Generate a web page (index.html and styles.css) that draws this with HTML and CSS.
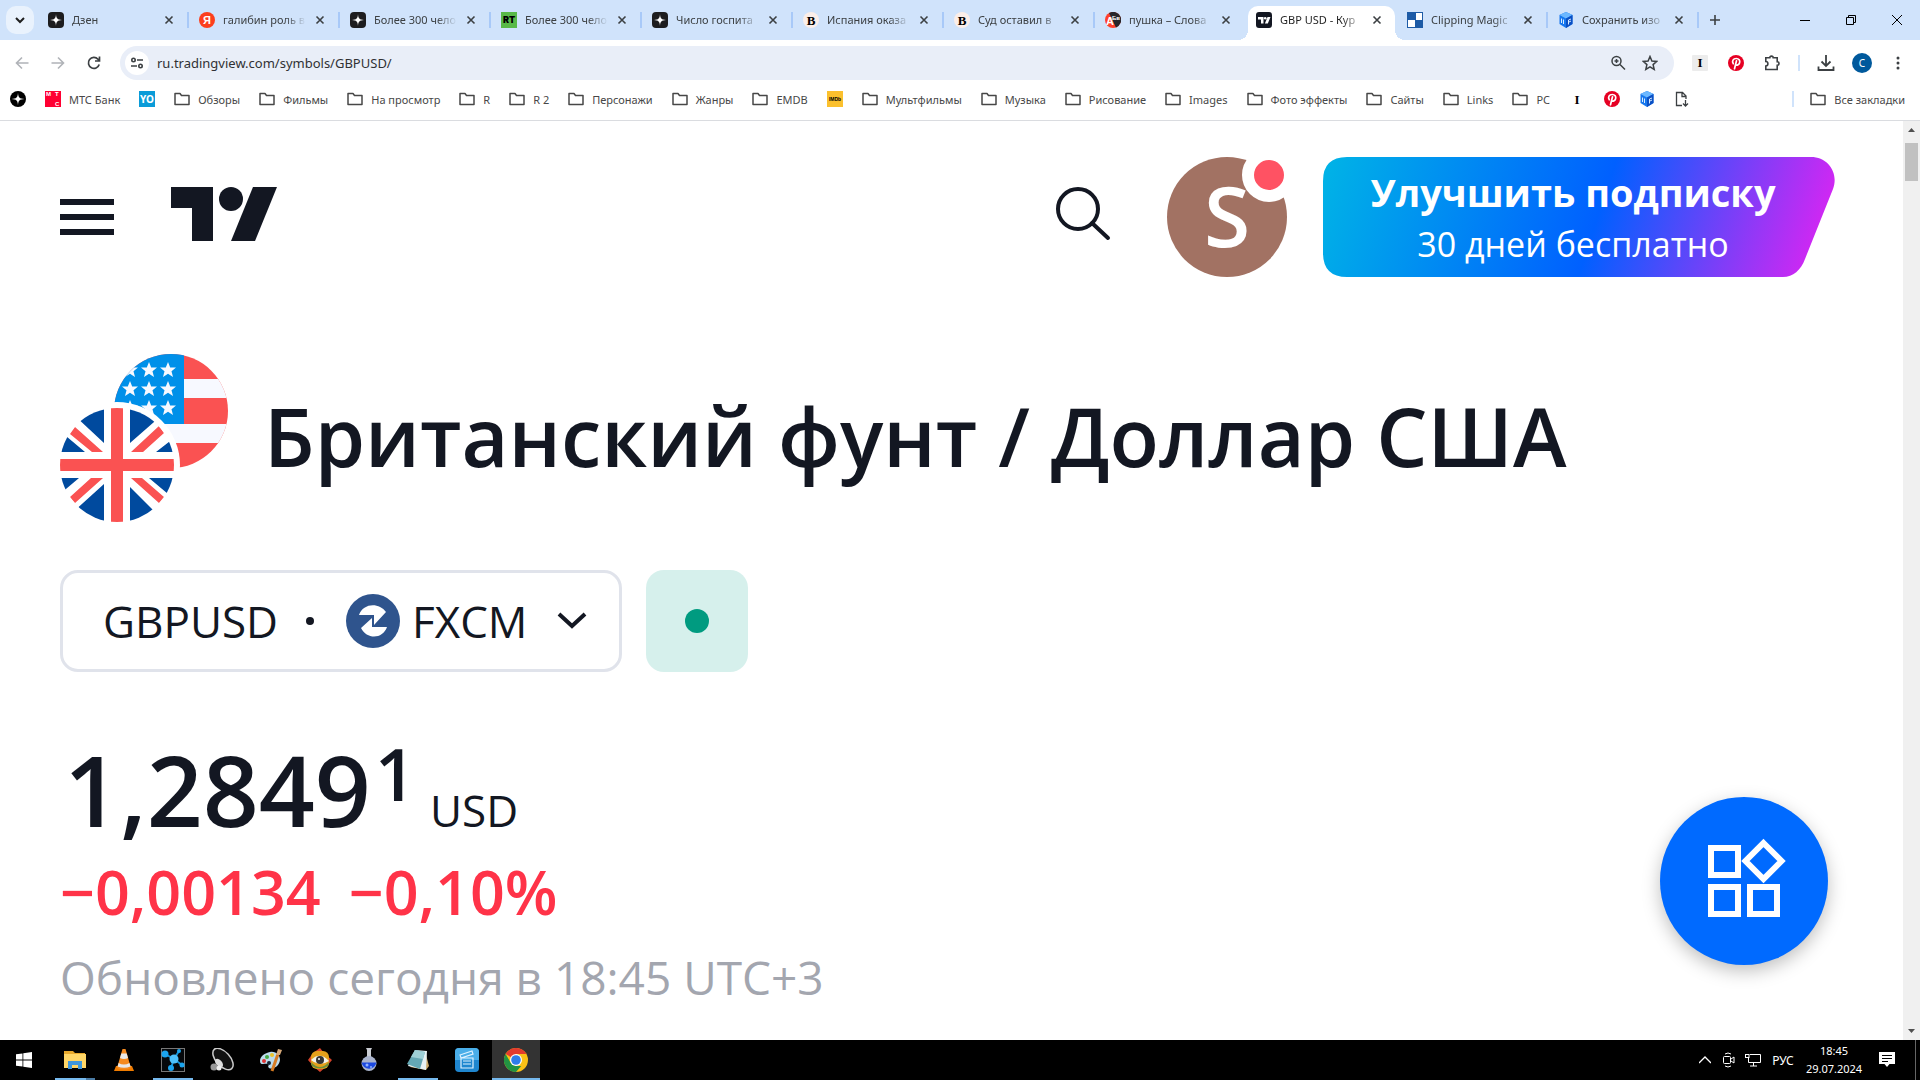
FILE: index.html
```html
<!DOCTYPE html>
<html lang="ru">
<head>
    <meta charset="UTF-8">
    <meta name="viewport" content="width=device-width, initial-scale=1.0">
    <title>GBP USD - Курс</title>
    <link rel="stylesheet" href="styles.css">
</head>
<body>

    <!-- Shared icons -->
    <svg class="sprite" aria-hidden="true">
        <symbol id="i-folder" viewBox="0 0 16 16"><path d="M1 13.500V2.500H6L7.500 4.500H15V13.500Z" fill="none" stroke="#474747" stroke-width="1.500" stroke-linejoin="round"/></symbol>
        <symbol id="i-close" viewBox="0 0 16 16"><path d="M4.500 4.500L11.500 11.500M11.500 4.500L4.500 11.500" stroke="#3c4043" stroke-width="1.600"/></symbol>
        <symbol id="i-zen" viewBox="0 0 16 16"><rect width="16" height="16" rx="4" fill="#1d1d1f"/><path d="M8 2C8.200 6.500 9.500 7.800 14 8C9.500 8.200 8.200 9.500 8 14C7.800 9.500 6.500 8.200 2 8C6.500 7.800 7.800 6.500 8 2Z" fill="#fff"/></symbol>
        <symbol id="i-zen-round" viewBox="0 0 16 16"><circle cx="8" cy="8" r="8" fill="#000"/><path d="M8 1.500C8.200 6.500 9.500 7.800 14.500 8C9.500 8.200 8.200 9.500 8 14.500C7.800 9.500 6.500 8.200 1.500 8C6.500 7.800 7.800 6.500 8 1.500Z" fill="#fff"/></symbol>
        <symbol id="i-bell" viewBox="0 0 16 16"><circle cx="8" cy="8" r="8" fill="#fbeee9"/><text x="8" y="13" text-anchor="middle" class="serif-mark">B</text></symbol>
        <symbol id="i-cube" viewBox="0 0 16 16"><path d="M8 0L14.500 3V12L8 16L1.500 12V3Z" fill="#1677ee"/><path d="M8 0L14.500 3L8 6.500L1.500 3Z" fill="#6cb8ff"/><path d="M8 6.500L14.500 3V12L8 16Z" fill="#0b50c4"/><path d="M3.500 6.500V11M5.500 7.500V12M10.500 12.500V8L13 7M11 10L13 9" stroke="#d8ecff" stroke-width="1" fill="none"/></symbol>
        <symbol id="i-pin" viewBox="0 0 16 16"><circle cx="8" cy="8" r="8" fill="#e60023"/><path d="M5.300 8.700C3.600 6.200 5.200 3.500 8.200 3.500C11 3.500 12.200 5.600 11.600 7.700C11 10 8.700 10.700 7.700 9.400M8.500 5.800L6.500 13.800" fill="none" stroke="#fff" stroke-width="1.700" stroke-linecap="round"/></symbol>
        <symbol id="i-tv" viewBox="0 0 16 16"><rect width="16" height="16" rx="3" fill="#131722"/><path d="M2 5H7.500V11.500H5V7.500H2Z" fill="#fff"/><circle cx="9.200" cy="6.300" r="1.300" fill="#fff"/><path d="M11.500 5H14.500L11.800 11.500H8.900Z" fill="#fff"/></symbol>
    </svg>

    <!-- Tab strip -->
    <header class="tab-strip">
        <button class="tab-search" aria-label="Поиск вкладок">
            <svg width="12" height="12" viewBox="0 0 12 12"><path d="M2 4L6 8L10 4" fill="none" stroke="#1f1f1f" stroke-width="2"/></svg>
        </button>
        <nav class="tabs">
            <div class="tab">
                <a href="#"><svg class="icon"><use href="#i-zen"/></svg><span>Дзен</span></a>
                <button aria-label="Закрыть"><svg class="icon"><use href="#i-close"/></svg></button>
            </div>
            <div class="tab">
                <a href="#"><svg class="icon" viewBox="0 0 16 16"><circle cx="8" cy="8" r="8" fill="#fc3f1d"/><text x="8" y="12" text-anchor="middle" class="sans-mark">Я</text></svg><span>галибин роль в</span></a>
                <button aria-label="Закрыть"><svg class="icon"><use href="#i-close"/></svg></button>
            </div>
            <div class="tab">
                <a href="#"><svg class="icon"><use href="#i-zen"/></svg><span>Более 300 чело</span></a>
                <button aria-label="Закрыть"><svg class="icon"><use href="#i-close"/></svg></button>
            </div>
            <div class="tab">
                <a href="#"><svg class="icon" viewBox="0 0 16 16"><rect width="16" height="16" fill="#58b947"/><text x="8" y="11" text-anchor="middle" class="rt-mark">RT</text></svg><span>Более 300 чело</span></a>
                <button aria-label="Закрыть"><svg class="icon"><use href="#i-close"/></svg></button>
            </div>
            <div class="tab">
                <a href="#"><svg class="icon"><use href="#i-zen"/></svg><span>Число госпита</span></a>
                <button aria-label="Закрыть"><svg class="icon"><use href="#i-close"/></svg></button>
            </div>
            <div class="tab">
                <a href="#"><svg class="icon"><use href="#i-bell"/></svg><span>Испания оказа</span></a>
                <button aria-label="Закрыть"><svg class="icon"><use href="#i-close"/></svg></button>
            </div>
            <div class="tab">
                <a href="#"><svg class="icon"><use href="#i-bell"/></svg><span>Суд оставил в</span></a>
                <button aria-label="Закрыть"><svg class="icon"><use href="#i-close"/></svg></button>
            </div>
            <div class="tab no-line">
                <a href="#"><svg class="icon" viewBox="0 0 16 16"><circle cx="8" cy="8" r="8" fill="#ff3f2b"/><path d="M4 1.100A8 8 0 1 1 11 15.400Z" fill="#26262b"/><text x="1" y="13" class="sans-mark">А</text><text x="7" y="8" class="tiny-mark">Бв</text></svg><span>пушка – Слова</span></a>
                <button aria-label="Закрыть"><svg class="icon"><use href="#i-close"/></svg></button>
            </div>
            <div class="tab no-line active">
                <a href="#"><svg class="icon"><use href="#i-tv"/></svg><span>GBP USD - Кур</span></a>
                <button aria-label="Закрыть"><svg class="icon"><use href="#i-close"/></svg></button>
            </div>
            <div class="tab">
                <a href="#"><svg class="icon" viewBox="0 0 16 16"><rect width="16" height="16" fill="#1d5ba6"/><path d="M9 1H15V8H9ZM1 8H8V15H1Z" fill="#fff"/></svg><span>Clipping Magic</span></a>
                <button aria-label="Закрыть"><svg class="icon"><use href="#i-close"/></svg></button>
            </div>
            <div class="tab">
                <a href="#"><svg class="icon"><use href="#i-cube"/></svg><span>Сохранить изо</span></a>
                <button aria-label="Закрыть"><svg class="icon"><use href="#i-close"/></svg></button>
            </div>
        </nav>
        <button class="new-tab" aria-label="Новая вкладка">
            <svg width="12" height="12" viewBox="0 0 12 12"><path d="M6 1V11M1 6H11" stroke="#3c4043" stroke-width="1.600"/></svg>
        </button>
        <div class="window-controls">
            <button aria-label="Свернуть"><svg width="10" height="10" viewBox="0 0 10 10"><path d="M0 5.500H10" stroke="#000"/></svg></button>
            <button aria-label="Восстановить"><svg width="10" height="10" viewBox="0 0 10 10"><path d="M.500 2.500H7.500V9.500H.500ZM2.500 2.500V.500H9.500V7.500H7.500" fill="none" stroke="#000"/></svg></button>
            <button aria-label="Закрыть окно"><svg width="10" height="10" viewBox="0 0 10 10"><path d="M0 0L10 10M10 0L0 10" stroke="#000"/></svg></button>
        </div>
    </header>

    <!-- Address bar -->
    <div class="toolbar">
        <button class="tool" aria-label="Назад"><svg width="16" height="16" viewBox="0 0 16 16"><path d="M14.500 8H2.500M8 2.500L2.500 8L8 13.500" fill="none" stroke="#b0b3b8" stroke-width="1.600"/></svg></button>
        <button class="tool" aria-label="Вперёд"><svg width="16" height="16" viewBox="0 0 16 16"><path d="M1.500 8H13.500M8 2.500L13.500 8L8 13.500" fill="none" stroke="#b0b3b8" stroke-width="1.600"/></svg></button>
        <button class="tool" aria-label="Обновить"><svg width="16" height="16" viewBox="0 0 16 16"><path d="M13.200 9.500A5.500 5.500 0 1 1 12 4.200L13.500 6M13.500 1.500V6H9" fill="none" stroke="#3c4043" stroke-width="1.700"/></svg></button>
        <div class="address">
            <button class="site-info" aria-label="Сведения о сайте"><svg width="14" height="14" viewBox="0 0 14 14"><g fill="none" stroke="#3c4043" stroke-width="1.600"><circle cx="3.500" cy="4" r="1.700"/><path d="M7 4H13M1 10H7"/><circle cx="10.500" cy="10" r="1.700"/></g></svg></button>
            <input type="text" aria-label="Адресная строка" value="ru.tradingview.com/symbols/GBPUSD/">
            <button class="in-address" aria-label="Масштаб"><svg width="16" height="16" viewBox="0 0 16 16"><g fill="none" stroke="#3c4043" stroke-width="1.500"><circle cx="6.500" cy="6" r="4.500"/><path d="M10 9.500L15 14.500M6.500 4V8M4.500 6H8.500"/></g></svg></button>
            <button class="in-address" aria-label="Добавить в закладки"><svg width="16" height="16" viewBox="0 0 16 16"><path d="M8 1.500L9.900 6L14.800 6.400L11.100 9.600L12.200 14.400L8 11.800L3.800 14.400L4.900 9.600L1.200 6.400L6.100 6Z" fill="none" stroke="#3c4043" stroke-width="1.500"/></svg></button>
        </div>
        <button class="tool" aria-label="Instapaper"><svg class="icon" viewBox="0 0 16 16"><rect width="16" height="16" rx="1" fill="#ececec"/><text x="8" y="12" text-anchor="middle" class="serif-mark">I</text></svg></button>
        <button class="tool" aria-label="Pinterest"><svg class="icon"><use href="#i-pin"/></svg></button>
        <button class="tool" aria-label="Расширения"><svg width="16" height="16" viewBox="0 0 16 16"><path d="M1.800 2.800H5.800C5.800 .500 9.200 .500 9.200 2.800H13.200V6.800C15.600 6.800 15.600 10.200 13.200 10.200V14.500H1.800V11C4.600 11 4.600 6.500 1.800 6.500Z" fill="none" stroke="#3c4043" stroke-width="1.600"/></svg></button>
        <span class="tool-line"></span>
        <button class="tool" aria-label="Загрузки"><svg width="18" height="18" viewBox="0 0 18 18"><path d="M9 1V12M4.500 7.500L9 12L13.500 7.500M1.500 12.500V16H16.500V12.500" fill="none" stroke="#3c4043" stroke-width="1.800"/></svg></button>
        <button class="tool" aria-label="Профиль"><span class="profile">С</span></button>
        <button class="tool" aria-label="Меню"><svg width="4" height="16" viewBox="0 0 4 16" fill="#3c4043"><circle cx="2" cy="3" r="1.500"/><circle cx="2" cy="8" r="1.500"/><circle cx="2" cy="13" r="1.500"/></svg></button>
    </div>

    <!-- Bookmarks bar -->
    <nav class="bookmarks">
        <a href="#" aria-label="Дзен"><svg class="icon"><use href="#i-zen-round"/></svg></a>
        <a href="#"><svg class="icon" viewBox="0 0 16 16"><rect width="16" height="16" fill="#ff0032"/><text x="1" y="5" class="tiny-mark">М</text><text x="10" y="5" class="tiny-mark">Т</text><text x="10" y="15" class="tiny-mark">С</text></svg>МТС Банк</a>
        <a href="#" aria-label="YO"><svg class="icon" viewBox="0 0 16 16"><rect width="16" height="16" fill="#0a9bd8"/><text x="8" y="12" text-anchor="middle" class="yo-mark">YO</text></svg></a>
        <a href="#"><svg class="icon"><use href="#i-folder"/></svg>Обзоры</a>
        <a href="#"><svg class="icon"><use href="#i-folder"/></svg>Фильмы</a>
        <a href="#"><svg class="icon"><use href="#i-folder"/></svg>На просмотр</a>
        <a href="#"><svg class="icon"><use href="#i-folder"/></svg>R</a>
        <a href="#"><svg class="icon"><use href="#i-folder"/></svg>R 2</a>
        <a href="#"><svg class="icon"><use href="#i-folder"/></svg>Персонажи</a>
        <a href="#"><svg class="icon"><use href="#i-folder"/></svg>Жанры</a>
        <a href="#"><svg class="icon"><use href="#i-folder"/></svg>EMDB</a>
        <a href="#" aria-label="IMDb"><svg class="icon" viewBox="0 0 16 16"><rect width="16" height="16" fill="#fbc02d"/><text x="8" y="10" text-anchor="middle" class="imdb-mark">IMDb</text></svg></a>
        <a href="#"><svg class="icon"><use href="#i-folder"/></svg>Мультфильмы</a>
        <a href="#"><svg class="icon"><use href="#i-folder"/></svg>Музыка</a>
        <a href="#"><svg class="icon"><use href="#i-folder"/></svg>Рисование</a>
        <a href="#"><svg class="icon"><use href="#i-folder"/></svg>Images</a>
        <a href="#"><svg class="icon"><use href="#i-folder"/></svg>Фото эффекты</a>
        <a href="#"><svg class="icon"><use href="#i-folder"/></svg>Сайты</a>
        <a href="#"><svg class="icon"><use href="#i-folder"/></svg>Links</a>
        <a href="#"><svg class="icon"><use href="#i-folder"/></svg>PC</a>
        <a href="#" aria-label="Instapaper"><svg class="icon" viewBox="0 0 16 16"><text x="8" y="13" text-anchor="middle" class="serif-mark">I</text></svg></a>
        <a href="#" aria-label="Pinterest"><svg class="icon"><use href="#i-pin"/></svg></a>
        <a href="#" aria-label="Cube"><svg class="icon"><use href="#i-cube"/></svg></a>
        <a href="#" aria-label="Файл"><svg class="icon" viewBox="0 0 16 16"><path d="M8 14.500H2.500V1.500H8.500L12 5V8M8 1.500V5.500H12M11.500 9V15M9 12.500L11.500 15L14 12.500" fill="none" stroke="#3c4043" stroke-width="1.300"/></svg></a>
        <a href="#" class="all-bookmarks"><svg class="icon"><use href="#i-folder"/></svg>Все закладки</a>
    </nav>

    <!-- Web page -->
    <div class="viewport">
        <main class="page">
            <div class="page-header">
                <button class="plain" aria-label="Меню"><svg width="54" height="54" viewBox="0 0 54 54"><path d="M0 12H54M0 27H54M0 42H54" stroke="#131722" stroke-width="6"/></svg></button>
                <a href="#" class="logo" aria-label="TradingView"><svg width="106" height="54" viewBox="0 0 106 54" fill="#131722"><path d="M0 0H42V54H21V21H0Z"/><circle cx="60" cy="12" r="12"/><path d="M82 0H106L84 54H60Z"/></svg></a>
                <button class="plain search" aria-label="Поиск"><svg width="56" height="56" viewBox="0 0 56 56" fill="none" stroke="#131722" stroke-width="4"><circle cx="23" cy="23" r="20"/><path d="M37 37L53 52" stroke-linecap="round"/></svg></button>
                <button class="plain avatar" aria-label="Профиль">S<span class="badge"></span></button>
                <button class="plain upgrade">
                    <svg viewBox="0 0 512 120" preserveAspectRatio="none" aria-hidden="true">
                        <defs><linearGradient id="sub" x1="0" y1="0" x2="1.040" y2=".080"><stop offset="0" stop-color="#00b4e6"/><stop offset=".550" stop-color="#0060ff"/><stop offset="1" stop-color="#dc24f2"/></linearGradient></defs>
                        <path d="M24 0H488C505 0 516 16 510 32L482 102C478 113 470 120 460 120H24Q0 120 0 96V24Q0 0 24 0Z" fill="url(#sub)"/>
                    </svg>
                    <strong>Улучшить подписку</strong>
                    <span>30 дней бесплатно</span>
                </button>
            </div>

            <div class="symbol-title">
                <svg class="pair" width="168" height="168" viewBox="0 0 168 168" aria-hidden="true">
                    <clipPath id="round"><circle cx="57" cy="57" r="57"/></clipPath>
                    <symbol id="star" viewBox="-8 -8 16 16"><path d="M0 -8L2.200 -2.600L8 -2.400L3.500 1.300L5 7L0 3.800L-5 7L-3.500 1.300L-8 -2.400L-2.200 -2.600Z" fill="#f7f9ff"/></symbol>
                    <!-- USA -->
                    <g transform="translate(54 0)" clip-path="url(#round)">
                        <rect width="114" height="114" fill="#fa5252"/>
                        <path d="M60 25H114V44H60ZM0 70H114V89H0Z" fill="#f7f9ff"/>
                        <rect width="70" height="70" fill="#0090e9"/>
                        <use href="#star" x="8" y="8" width="16" height="16"/><use href="#star" x="27" y="8" width="16" height="16"/><use href="#star" x="46" y="8" width="16" height="16"/>
                        <use href="#star" x="8" y="27" width="16" height="16"/><use href="#star" x="27" y="27" width="16" height="16"/><use href="#star" x="46" y="27" width="16" height="16"/>
                        <use href="#star" x="8" y="46" width="16" height="16"/><use href="#star" x="27" y="46" width="16" height="16"/><use href="#star" x="46" y="46" width="16" height="16"/>
                    </g>
                    <!-- Great Britain -->
                    <circle cx="57" cy="111" r="63" fill="#fff"/>
                    <g transform="translate(0 54)" clip-path="url(#round)">
                        <path d="M44 35L14 7V0H44ZM70 35L102 7V0H70ZM25 44L0 23V44ZM96 44L114 30V44ZM19 70L0 86V70ZM44 76L12 105V114H44ZM70 79L102 111V114H70ZM89 70L114 91V70Z" fill="#004a9e"/>
                        <path d="M43 44H32L10 26L15 19ZM71 44H83L104 25L99 18ZM43 70H31L10 89L15 95ZM71 70H82L104 89L99 95ZM51 0H63V51H114V63H63V114H51V63H0V51H51Z" fill="#fa5252"/>
                    </g>
                </svg>
                <h1>Британский фунт / Доллар США</h1>
            </div>

            <div class="symbol-row">
                <button class="symbol-button">
                    <span>GBPUSD</span>
                    <span class="dot"></span>
                    <svg width="54" height="54" viewBox="0 0 54 54"><circle cx="27" cy="27" r="27" fill="#2f548d"/><path d="M13 21C17 9 33 8 40 18L28 31V21ZM41 33C37 45 21 46 15 34L26 24V33Z" fill="#fff"/></svg>
                    <span class="exchange">FXCM</span>
                    <svg class="chevron" width="30" height="18" viewBox="0 0 30 18"><path d="M2 2L15 14L28 2" fill="none" stroke="#131722" stroke-width="4"/></svg>
                </button>
                <button class="status" aria-label="Рынок открыт"><span></span></button>
            </div>

            <div class="price">
                <strong>1,2849<sup>1</sup></strong>
                <span>USD</span>
            </div>
            <div class="change">
                <span>−0,00134</span>
                <span>−0,10%</span>
            </div>
            <p class="updated">Обновлено сегодня в 18:45 UTC+3</p>

            <button class="plain fab" aria-label="Виджеты"><svg width="72" height="72" viewBox="0 0 72 72" fill="none" stroke="#fff" stroke-width="6"><path d="M3 3H30V30H3ZM3 42H30V69H3ZM42 42H69V69H42ZM55.500 -2L73.500 16L55.500 34L37.500 16Z"/></svg></button>
        </main>
        <div class="scrollbar" aria-hidden="true">
            <svg width="7" height="4" viewBox="0 0 7 4"><path d="M0 4L3.500 0L7 4Z" fill="#505050"/></svg>
            <span class="thumb"></span>
            <svg width="7" height="4" viewBox="0 0 7 4"><path d="M0 0L3.500 4L7 0Z" fill="#505050"/></svg>
        </div>
    </div>

    <!-- Windows taskbar -->
    <footer class="taskbar">
        <button class="start" aria-label="Пуск"><svg width="16" height="16" viewBox="0 0 16 16" fill="#fff"><path d="M0 2.300L6.500 1.400V7.600H0ZM7.300 1.300L16 0V7.600H7.300ZM0 8.400H6.500V14.600L0 13.700ZM7.300 8.400H16V16L7.300 14.700Z"/></svg></button>
        <button class="open several" aria-label="Проводник"><svg width="24" height="24" viewBox="0 0 24 24"><path d="M1 3H10L12 5H22V20H1Z" fill="#e8a92c"/><path d="M1 6H23V20H1Z" fill="#ffd667"/><path d="M5 21V13H19V21H15V17H9V21Z" fill="#3f97dc"/></svg></button>
        <button aria-label="VLC"><svg width="24" height="24" viewBox="0 0 24 24"><path d="M4 18H20L22 23H2Z" fill="#f07c00"/><path d="M10.500 1H13.500L19 20Q12 23 5 20Z" fill="#f58a1f"/><path d="M9.300 5.500H14.700L16 10Q12 12 8 10ZM6.600 15Q12 18 17.400 15L18.600 18.500Q12 21 5.600 18.500Z" fill="#e8e8e8"/></svg></button>
        <button class="open" aria-label="Граф"><svg width="24" height="24" viewBox="0 0 24 24"><rect x=".500" y=".500" width="23" height="23" fill="#05080b" stroke="#777"/><path d="M4 6L13 11L18 3M13 11L10 20M13 11L21 17" stroke="#1593d8" stroke-width="2" fill="none"/><g fill="#1ba4ee"><circle cx="4" cy="6" r="3.500"/><circle cx="13" cy="11" r="4.500" fill="#4dc1fb"/><circle cx="18" cy="3" r="2"/><circle cx="10" cy="20" r="3"/><circle cx="21" cy="17" r="2.500"/></g></svg></button>
        <button aria-label="Звук"><svg width="24" height="24" viewBox="0 0 24 24"><ellipse cx="13" cy="11" rx="7" ry="13" transform="rotate(-42 13 11)" fill="#111" stroke="#ccc" stroke-width="1.500"/><ellipse cx="9" cy="15" rx="3" ry="5" transform="rotate(-42 9 15)" fill="#ddd"/><circle cx="4" cy="19" r="3.500" fill="#999"/><circle cx="9" cy="20" r="2.500" fill="#eee"/></svg></button>
        <button aria-label="Paint"><svg width="24" height="24" viewBox="0 0 24 24"><path d="M11 4C17 3 21 7 21 12C20 19 13 22 10 20C8 18 11 17 9 16C6 15 1 18 1 13C1 8 6 5 11 4Z" fill="#bcdcec"/><circle cx="5" cy="13" r="2" fill="#d33"/><circle cx="8" cy="9" r="2" fill="#4a4"/><circle cx="13" cy="7" r="2" fill="#ecc52a"/><circle cx="10" cy="15" r="2" fill="#123"/><path d="M13 23L19 6" stroke="#d87c22" stroke-width="3"/><path d="M17 7L19 1L23 2L21 7Z" fill="#d6a878"/></svg></button>
        <button aria-label="Просмотр"><svg width="24" height="24" viewBox="0 0 24 24"><path d="M12 0L16 5L24 12L19 18L12 24L6 19L0 12L5 5Z" fill="#d8432a"/><rect x="3" y="3" width="18" height="18" rx="6" fill="#e4a01c"/><path d="M3 14Q12 24 21 14L20 18Q12 23 4 18Z" fill="#6c8f3c"/><path d="M3 12Q12 3 21 13Q12 19 3 12Z" fill="#f2f2ea"/><circle cx="12" cy="12" r="4" fill="#333"/><circle cx="11" cy="11" r="1" fill="#fff"/></svg></button>
        <button aria-label="Колба"><svg width="24" height="24" viewBox="0 0 24 24"><path d="M9 0H15L14 2V10H10V2Z" fill="#c9ccd2"/><circle cx="12" cy="15.500" r="7.500" fill="#aab4cc"/><path d="M4.600 14.500H19.400A7.500 7.500 0 0 1 4.600 14.500Z" fill="#1c49e0"/><circle cx="10" cy="17" r="1.500" fill="#8fb0ff"/><circle cx="14" cy="19" r="1" fill="#8fb0ff"/></svg></button>
        <button class="open" aria-label="Блокнот"><svg width="24" height="24" viewBox="0 0 24 24"><path d="M19 3L23 18L20 22L4 19Z" fill="#caa868"/><path d="M9 2L21 3L20 22L2 18Z" fill="#e8f2f4"/><path d="M9 2L19 4L14 21L1 16Z" fill="#64a8b4"/><path d="M9 2L19 4L17 11L5 9Z" fill="#9ed0d6"/></svg></button>
        <button aria-label="Видео"><svg width="24" height="24" viewBox="0 0 24 24"><rect width="24" height="24" rx="4" fill="#1f86cf"/><path d="M0 12V4Q0 0 4 0H20Q24 0 24 4V12Z" fill="#4aaee8"/><path d="M5 7L17 3L18 6L6 10ZM6 10H18V20H6ZM8 13H16M8 16H16" fill="none" stroke="#dff2ff" stroke-width="1.200"/></svg></button>
        <button class="open current" aria-label="Chrome"><svg width="24" height="24" viewBox="0 0 24 24"><circle cx="12" cy="12" r="12" fill="#fbc116"/><path d="M12 12L1.600 6A12 12 0 0 1 22.400 6H12Z" fill="#e33b2e"/><path d="M12 24A12 12 0 0 1 1.600 6L6.800 15L12 18H17.200Z" fill="#229342"/><circle cx="12" cy="12" r="6" fill="#fff"/><circle cx="12" cy="12" r="4.800" fill="#2f7de9"/></svg></button>
        <div class="tray">
            <button aria-label="Скрытые значки"><svg width="12" height="8" viewBox="0 0 12 8"><path d="M0 7L6 1L12 7" fill="none" stroke="#fff" stroke-width="1.300"/></svg></button>
            <button aria-label="Камера"><svg width="12" height="16" viewBox="0 0 12 16" fill="none" stroke="#fff"><rect x=".500" y="4.500" width="7" height="7" rx="1"/><path d="M8 7L11 5V11L8 9M2 2Q5 0 8 2M2 14Q5 16 8 14"/></svg></button>
            <button aria-label="Сеть"><svg width="16" height="14" viewBox="0 0 16 14" fill="none" stroke="#fff"><path d="M5 1.500H15.500V9.500H3.500V5M8.500 9.500V13M5 13H12"/><rect x=".500" y="1.500" width="3.500" height="3"/></svg></button>
            <button class="lang">РУС</button>
            <button class="clock"><time>18:45</time><time>29.07.2024</time></button>
            <button class="notify" aria-label="Уведомления"><svg width="16" height="16" viewBox="0 0 16 16"><path d="M0 0H16V12H10.500L8 15L5.500 12H0Z" fill="#fff"/><path d="M3 3.500H13M3 6.500H13M3 9.500H9" stroke="#000"/></svg></button>
        </div>
    </footer>

</body>
</html>
```
FILE: styles.css
```css
* {
    box-sizing: border-box;
}
body {
    margin: 0;
    height: 100vh;
    display: flex;
    flex-direction: column;
    overflow: hidden;
    background-color: #fff;
    color: #131722;
    font-family: 'Noto Sans', sans-serif;
    font-size: 11px;
}
a {
    color: inherit;
    text-decoration: none;
}
button {
    display: flex;
    align-items: center;
    justify-content: center;
    padding: 0;
    border: none;
    background: none;
    color: inherit;
    font: inherit;
    cursor: pointer;
}
svg {
    display: block;
    flex: none;
}
.sprite {
    display: none;
}
.icon {
    width: 16px;
    height: 16px;
}

/* Letters inside the small site icons */
.serif-mark {
    font: bold 13px 'Liberation Serif', serif;
}
.sans-mark {
    font: bold 11px 'Liberation Sans', sans-serif;
    fill: #fff;
}
.rt-mark {
    font: 900 9px Inter, sans-serif;
}
.tiny-mark {
    font: bold 6px 'Liberation Sans', sans-serif;
    fill: #fff;
}
.yo-mark {
    font: bold 10px 'Noto Sans', sans-serif;
    fill: #fff;
}
.imdb-mark {
    font: bold 5px 'Liberation Sans', sans-serif;
}

/* Tab strip */
.tab-strip {
    display: flex;
    flex: none;
    height: 40px;
    padding-left: 6px;
    background-color: #d0e3fb;
}
.tab-search {
    width: 28px;
    height: 28px;
    margin: 6px 4px 0 0;
    border-radius: 10px;
    background-color: #e9f2fd;
}
.tabs {
    display: flex;
}
.tab {
    display: flex;
    align-items: center;
    width: 151px;
    padding: 0 12px 0 10px;
    background: linear-gradient(#a8c9f8, #a8c9f8) right center / 2px 16px no-repeat;
    color: #3c4043;
}
.tab a {
    display: flex;
    gap: 8px;
    flex: 1;
    min-width: 0;
    margin-right: 6px;
    line-height: 16px;
}
.tab span {
    flex: 1;
    overflow: hidden;
    white-space: nowrap;
    -webkit-mask-image: linear-gradient(90deg, #000 75%, transparent);
    mask-image: linear-gradient(90deg, #000 75%, transparent);
}
.tab.no-line {
    background: none;
}
.tab.active {
    position: relative;
    width: 147px;
    margin: 6px 2px 0;
    padding: 0 10px 6px 8px;
    border-radius: 10px 10px 0 0;
    background-color: #fff;
    color: #1f1f1f;
}
/* flared feet of the active tab */
.tab.active::before,
.tab.active::after {
    content: "";
    position: absolute;
    bottom: 0;
    width: 10px;
    height: 10px;
}
.tab.active::before {
    left: -10px;
    background: radial-gradient(circle at 0 0, transparent 10px, #fff 10px);
}
.tab.active::after {
    right: -10px;
    background: radial-gradient(circle at 100% 0, transparent 10px, #fff 10px);
}
.new-tab {
    width: 32px;
}
.window-controls {
    display: flex;
    margin-left: auto;
}
.window-controls button {
    width: 46px;
}

/* Address bar */
.toolbar {
    display: flex;
    flex: none;
    align-items: center;
    height: 46px;
    padding: 0 4px;
}
.tool {
    width: 36px;
    height: 34px;
}
.tool-line {
    width: 2px;
    height: 16px;
    margin: 0 8px;
    background-color: #d0e3fb;
}
.address {
    display: flex;
    flex: 1;
    align-items: center;
    height: 34px;
    margin: 0 8px;
    padding: 0 8px 0 5px;
    border-radius: 17px;
    background-color: #e9eef8;
}
.site-info {
    width: 24px;
    height: 24px;
    border-radius: 50%;
    background-color: #fff;
}
.address input {
    flex: 1;
    padding: 0 0 0 8px;
    border: none;
    outline: none;
    background: none;
    color: #303134;
    font: 13px 'Noto Sans', sans-serif;
}
.in-address {
    width: 32px;
}
.profile {
    width: 20px;
    border-radius: 50%;
    background-color: #00599c;
    color: #fff;
    font-size: 10px;
    line-height: 20px;
}

/* Bookmarks bar */
.bookmarks {
    display: flex;
    flex: none;
    align-items: center;
    gap: 19px;
    height: 35px;
    padding: 0 15px 8px 10px;
    border-bottom: 1px solid #dadce0;
    color: #474747;
    white-space: nowrap;
}
.bookmarks a {
    display: flex;
    align-items: center;
    gap: 8px;
}
.bookmarks .all-bookmarks {
    margin-left: auto;
    padding-left: 16px;
    border-left: 2px solid #d0e3fb;
}

/* Web page */
.viewport {
    display: flex;
    flex: 1;
    min-height: 0;
}
.page {
    position: relative;
    flex: 1;
    padding: 36px 68px 0 60px;
    overflow: hidden;
    font-family: 'Open Sans', sans-serif;
}
.page-header {
    display: flex;
    align-items: center;
    height: 120px;
}
.logo {
    margin: 0 auto 6px 57px;
}
.search {
    margin: 0 56px 6px 0;
}
.avatar {
    position: relative;
    width: 120px;
    height: 120px;
    margin-right: 36px;
    border-radius: 50%;
    background-color: #a27263;
    color: #fff;
    font-size: 84px;
    font-weight: 600;
    line-height: 112px;
    padding-bottom: 4px;
}
.badge {
    position: absolute;
    top: -9px;
    right: -9px;
    width: 54px;
    height: 54px;
    border: 12px solid #fff;
    border-radius: 50%;
    background-color: #ff5263;
}
.upgrade {
    position: relative;
    flex-direction: column;
    gap: 2px;
    width: 512px;
    height: 120px;
    padding: 2px 12px 0 0;
    color: #fff;
    font-size: 34px;
    line-height: 50px;
}
.upgrade svg {
    position: absolute;
    inset: 0;
    width: 100%;
    height: 100%;
}
.upgrade strong,
.upgrade span {
    position: relative;
}
.upgrade strong {
    font-size: 38px;
}
.symbol-title {
    display: flex;
    align-items: center;
    gap: 36px;
    margin-top: 77px;
}
h1 {
    margin: 0;
    padding-bottom: 4px;
    font-size: 81px;
    font-weight: 600;
    line-height: 96px;
    white-space: nowrap;
}
.symbol-row {
    display: flex;
    gap: 24px;
    margin-top: 48px;
}
.symbol-button {
    height: 102px;
    padding: 0 32px 0 40px;
    border: 3px solid #e0e3eb;
    border-radius: 18px;
    font-size: 44px;
}
.dot {
    width: 8px;
    height: 8px;
    margin: 0 32px 0 28px;
    border-radius: 50%;
    background-color: #131722;
}
.exchange {
    margin: 0 30px 0 12px;
}
.status {
    width: 102px;
    height: 102px;
    border-radius: 18px;
    background-color: #d6f0ec;
}
.status span {
    width: 24px;
    height: 24px;
    border-radius: 50%;
    background-color: #009b80;
}
.price {
    display: flex;
    align-items: baseline;
    gap: 14px;
    margin-top: 57px;
    padding-left: 4px;
    font-size: 44px;
    line-height: 48px;
}
.price strong {
    font-size: 98px;
    font-weight: 600;
    line-height: 120px;
}
.price sup {
    margin-left: 4px;
    font-size: 72px;
    line-height: 0;
    vertical-align: 26px;
}
.change {
    display: flex;
    gap: 28px;
    color: #ff3348;
    font-size: 61px;
    font-weight: 600;
    line-height: 86px;
}
.updated {
    margin: 0;
    color: #a3a6af;
    font-size: 46px;
    line-height: 84px;
}
.fab {
    position: absolute;
    right: 75px;
    bottom: 75px;
    width: 168px;
    height: 168px;
    border-radius: 50%;
    background-color: #006aff;
    box-shadow: 0 6px 18px rgba(0, 0, 0, 0.25);
}
.fab svg {
    overflow: visible;
}
.scrollbar {
    display: flex;
    flex-direction: column;
    align-items: center;
    width: 17px;
    padding: 7px 0;
    background-color: #f0f0f0;
}
.thumb {
    width: 13px;
    height: 38px;
    margin: 11px 0 auto;
    background-color: #c1c1c1;
}

/* Taskbar */
.taskbar {
    display: flex;
    flex: none;
    gap: 1px;
    height: 40px;
    background-color: #000;
    color: #fff;
}
.taskbar > button {
    width: 48px;
}
.taskbar .start {
    margin-right: 2px;
}
.open {
    background: linear-gradient(#76b9ed, #76b9ed) center bottom / 40px 2px no-repeat;
}
.several {
    background-image: linear-gradient(90deg, #76b9ed 31px, #4a7ba5 31px);
}
.current {
    background-color: #333;
    background-size: 48px 2px;
}
.tray {
    display: flex;
    margin-left: auto;
    padding-right: 4px;
}
.tray button {
    width: 24px;
}
.tray .lang {
    width: 36px;
    font-size: 12px;
}
.tray .clock {
    flex-direction: column;
    width: 66px;
    line-height: 18px;
}
.tray .notify {
    width: 40px;
    margin-right: 8px;
}
.tray::after {
    content: "";
    width: 1px;
    background-color: #666;
}
```
